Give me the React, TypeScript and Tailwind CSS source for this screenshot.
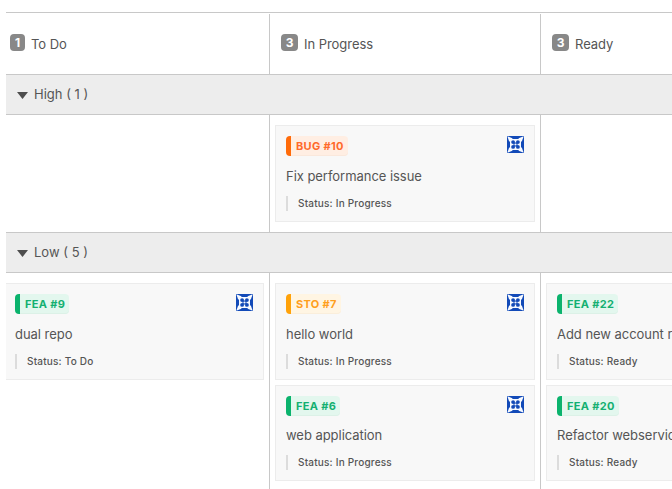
type Kind = "bug" | "story" | "feature";

interface Issue {
  kind: Kind;
  id: string;
  title: string;
  status: string;
  compact?: boolean;
}

const tagStyles: Record<Kind, string> = {
  bug: "border-l-[#ff6b0a] bg-[#ffeee3] text-[#ff6a2b] shadow-[inset_0_-1px_0_#fae8dc]",
  story: "border-l-[#ffa20a] bg-[#fff5e3] text-[#ff9f1c] shadow-[inset_0_-1px_0_#faeedb]",
  feature: "border-l-[#0bb36d] bg-[#e3f7ee] text-[#14b071] shadow-[inset_0_-1px_0_#dcf1e7]",
};

function Identicon() {
  return (
    <svg className="mt-[10px] mr-[10px] h-[17px] w-[17px] shrink-0" viewBox="0 0 17 17">
      <rect width="17" height="17" fill="#124ab8" />
      <g fill="#f7faff">
        <path d="M0.3 0.3L5.4 2.2V5.4H2.2Z" />
        <path d="M16.7 0.3L11.6 2.2V5.4H14.8Z" />
        <path d="M0.3 16.7L5.4 14.8V11.6H2.2Z" />
        <path d="M16.7 16.7L11.6 14.8V11.6H14.8Z" />
        <rect x="3" y="3" width="11" height="11" />
      </g>
      <g fill="#124ab8">
        <circle cx="6.1" cy="6.1" r="1.9" />
        <circle cx="10.9" cy="6.1" r="1.9" />
        <circle cx="6.1" cy="10.9" r="1.9" />
        <circle cx="10.9" cy="10.9" r="1.9" />
        <rect x="6.5" y="6.5" width="4" height="4" />
      </g>
      <circle cx="8.5" cy="8.5" r="1.1" fill="#f7faff" />
    </svg>
  );
}

function Card({ kind, id, title, status, compact }: Issue) {
  return (
    <article
      className={`w-[260px] shrink-0 border border-[#ececec] bg-[#f8f8f8] pl-[10px] ${compact ? "h-24" : "h-[97px]"}`}
    >
      <div className="flex h-[30px] items-start justify-between">
        <span
          className={`mt-[10px] flex h-5 items-center rounded-[4px] border-l-[5px] pr-1 pl-[5px] text-[11px] font-bold tracking-[0.32px] whitespace-nowrap ${tagStyles[kind]}`}
        >
          {id}
        </span>
        <Identicon />
      </div>
      <p className={`leading-5 tracking-[-0.04px] whitespace-nowrap ${compact ? "mt-[9px]" : "mt-[10px]"}`}>{title}</p>
      <div className="mt-[10px] h-[15px] border-l-2 border-[#dcdcdc] pl-[10px] text-[10px] leading-[15px] font-medium tracking-[0.2px]">
        Status: {status}
      </div>
    </article>
  );
}

function Heading({ count, label }: { count: number; label: string }) {
  return (
    <div className="flex items-start pt-5">
      <span
        className={`flex h-[17px] items-center justify-center rounded-[4px] bg-[#888] text-[12px] font-bold text-white ${count === 1 ? "w-[15px]" : "w-[17px]"}`}
      >
        {count}
      </span>
      <span className="ml-[6px] leading-5 tracking-[-0.04px]">{label}</span>
    </div>
  );
}

function Band({ label, count }: { label: string; count: number }) {
  return (
    <div className="flex h-[41px] items-center border-y border-[#c8c8c8] bg-[#ededed] pl-[11px]">
      <svg className="mt-px h-[7px] w-[11px]" viewBox="0 0 11 7">
        <path d="M0 0H11L5.5 7Z" fill="#4d4d4d" />
      </svg>
      <span className="ml-[6px]">
        {label} ( {count} )
      </span>
    </div>
  );
}

const columns = "grid grid-cols-[264px_271px_271px]";
const cell = "border-r border-[#c8c8c8]";

export default function App() {
  return (
    <div className="h-[489px] w-[672px] overflow-hidden bg-white pt-3 pl-[6px] font-['Inter',sans-serif] text-[13px] text-[#555]">
      <main className="flex h-[477px] w-[666px] flex-col overflow-hidden border-t border-[#c8c8c8]">
        <header className={`${columns} h-[61px] shrink-0 pt-px`}>
          <div className={`${cell} pl-1`}>
            <Heading count={1} label="To Do" />
          </div>
          <div className={`${cell} pl-[11px]`}>
            <Heading count={3} label="In Progress" />
          </div>
          <div className="pl-[11px]">
            <Heading count={3} label="Ready" />
          </div>
        </header>

        <Band label="High" count={1} />
        <section className={`${columns} h-[117px] shrink-0`}>
          <div className={cell} />
          <div className={`${cell} pt-[10px] pl-[5px]`}>
            <Card kind="bug" id="BUG #10" title="Fix performance issue" status="In Progress" />
          </div>
          <div />
        </section>

        <Band label="Low" count={5} />
        <section className={`${columns} h-[216px] shrink-0`}>
          <div className={`${cell} pt-[10px]`}>
            <div className="-ml-[2px]">
              <Card kind="feature" id="FEA #9" title="dual repo" status="To Do" />
            </div>
          </div>
          <div className={`${cell} flex flex-col gap-[5px] pt-[10px] pl-[5px]`}>
            <Card kind="story" id="STO #7" title="hello world" status="In Progress" />
            <Card kind="feature" id="FEA #6" title="web application" status="In Progress" compact />
          </div>
          <div className="flex flex-col gap-[5px] pt-[10px] pl-[5px]">
            <Card kind="feature" id="FEA #22" title="Add new account registration" status="Ready" />
            <Card kind="feature" id="FEA #20" title="Refactor webservices" status="Ready" compact />
          </div>
        </section>
      </main>
    </div>
  );
}
